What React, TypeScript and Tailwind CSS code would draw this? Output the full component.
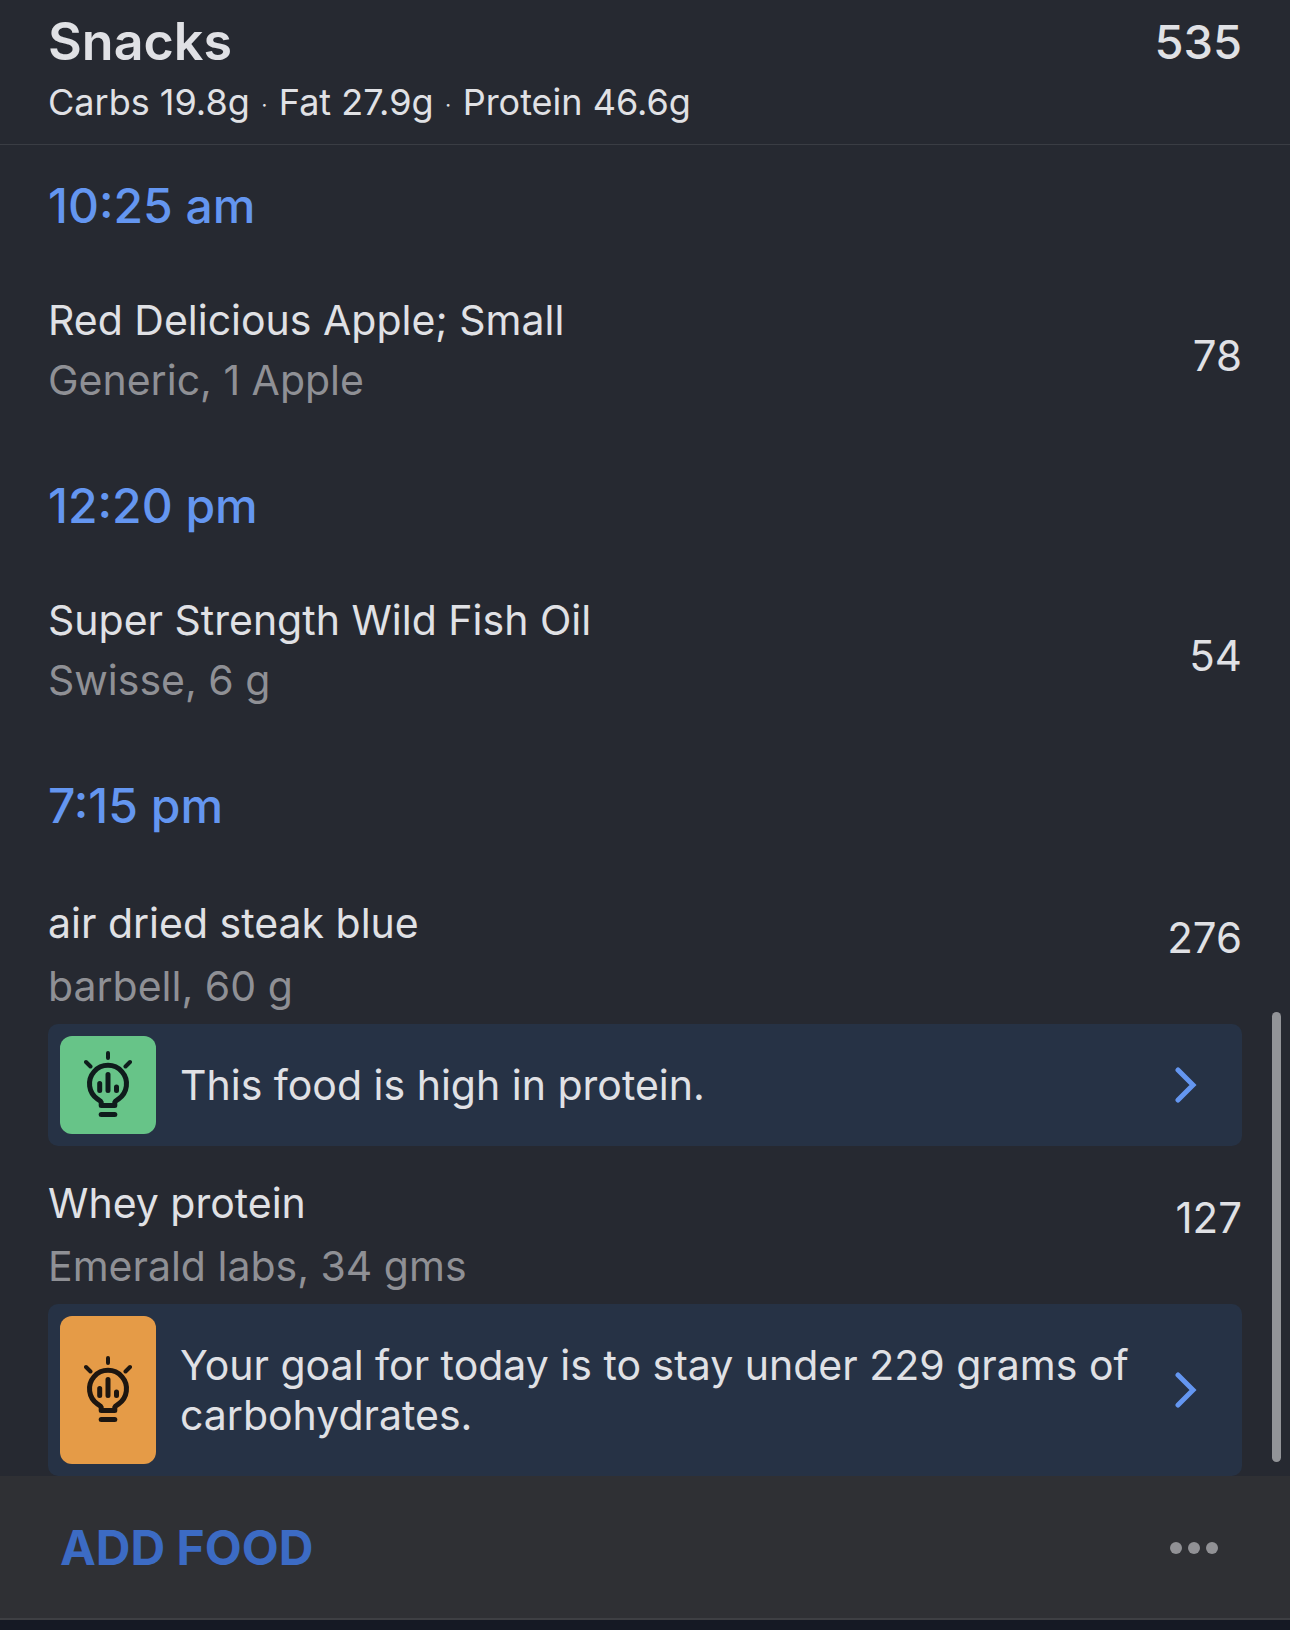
import { Fragment } from "react";

interface Insight {
  text: string;
  tone: "good" | "warning";
}

interface Food {
  name: string;
  detail: string;
  calories: number;
  insight?: Insight;
}

interface TimeGroup {
  time: string;
  foods: Food[];
}

const macros = ["Carbs 19.8g", "Fat 27.9g", "Protein 46.6g"];

const groups: TimeGroup[] = [
  {
    time: "10:25 am",
    foods: [{ name: "Red Delicious Apple; Small", detail: "Generic, 1 Apple", calories: 78 }],
  },
  {
    time: "12:20 pm",
    foods: [{ name: "Super Strength Wild Fish Oil", detail: "Swisse, 6 g", calories: 54 }],
  },
  {
    time: "7:15 pm",
    foods: [
      {
        name: "air dried steak blue",
        detail: "barbell, 60 g",
        calories: 276,
        insight: { text: "This food is high in protein.", tone: "good" },
      },
      {
        name: "Whey protein",
        detail: "Emerald labs, 34 gms",
        calories: 127,
        insight: {
          text: "Your goal for today is to stay under 229 grams of carbohydrates.",
          tone: "warning",
        },
      },
    ],
  },
];

const toneStyles = {
  good: "bg-[#67c488] text-[#0f1c1c]",
  warning: "bg-[#e59b47] text-[#1d1610]",
};

function BulbIcon() {
  return (
    <svg
      viewBox="0 0 48 66"
      className="h-[66px] w-12"
      fill="none"
      stroke="currentColor"
      strokeWidth="5"
      strokeLinecap="round"
      strokeLinejoin="round"
      aria-hidden="true"
    >
      <path d="M24 2v5M2 11l4.500 4.500M46 11l-4.500 4.500" strokeWidth="4" />
      <path d="M17.200 54.500v-3.200c-.5-1.600-2.200-2.200-3.600-3.200a18.500 18.500 0 1 1 20.800 0c-1.400 1-3.100 1.600-3.600 3.200v3.200Z" />
      <path d="M15.700 32.500v7M24 23.500v16M32.500 36v3.500" />
      <path d="M17.200 63.500h13.600" />
    </svg>
  );
}

function Chevron() {
  return (
    <svg
      viewBox="0 0 24 36"
      className="mr-8 h-9 w-6 shrink-0 self-center"
      fill="none"
      stroke="#6496f0"
      strokeWidth="5"
      strokeLinecap="round"
      aria-hidden="true"
    >
      <path d="M4 3l15 15L4 33" />
    </svg>
  );
}

function InsightCard({ insight }: { insight: Insight }) {
  return (
    <button type="button" className="flex w-full items-stretch rounded-[10px] bg-[#263245] p-3 text-left">
      <span
        className={`flex w-24 shrink-0 items-center justify-center rounded-xl pb-0.5 ${toneStyles[insight.tone]}`}
      >
        <BulbIcon />
      </span>
      <span className="flex-1 py-6 pl-6 text-[41px] leading-[50px]">{insight.text}</span>
      <Chevron />
    </button>
  );
}

function FoodRow({ food }: { food: Food }) {
  if (food.insight) {
    return (
      <li>
        <div className="flex items-start justify-between pt-[26px] pb-1.5">
          <div className="text-[41px] leading-[63px]">
            <h3>{food.name}</h3>
            <p className="text-[#8f9095]">{food.detail}</p>
          </div>
          <span className="mt-4 text-[42px] leading-[60px]">{food.calories}</span>
        </div>
        <InsightCard insight={food.insight} />
      </li>
    );
  }

  return (
    <li className="flex items-start justify-between pt-6 pb-[35px]">
      <div className="text-[41px] leading-[60px]">
        <h3>{food.name}</h3>
        <p className="text-[#8f9095]">{food.detail}</p>
      </div>
      <span className="mt-9 text-[42px] leading-[60px]">{food.calories}</span>
    </li>
  );
}

export default function App() {
  return (
    <main className="flex min-h-screen flex-col bg-[#262931] font-['Inter',sans-serif] text-[#e0e1e5]">
      <header className="border-b border-[#3a3d44] px-12 pt-3 pb-[22px]">
        <div className="flex items-center justify-between">
          <h1 className="text-[52px] leading-[60px] font-semibold">Snacks</h1>
          <span className="text-[47px] leading-[60px] font-medium">535</span>
        </div>
        <p className="mt-2.5 text-[36px] leading-10">
          {macros.map((macro, i) => (
            <Fragment key={macro}>
              {i > 0 && <span className="mx-1.5 align-middle text-xl leading-none"> · </span>}
              {macro}
            </Fragment>
          ))}
        </p>
      </header>

      <div className="relative">
        {groups.map((group) => (
          <section key={group.time} className="px-12 pt-[37px]">
            <h2 className="text-[48px] leading-[48px] font-medium text-[#6496f0]">{group.time}</h2>
            <ul className="pt-9">
              {group.foods.map((food) => (
                <FoodRow key={food.name} food={food} />
              ))}
            </ul>
          </section>
        ))}
        {/* Scroll indicator */}
        <div className="absolute right-[9px] bottom-3.5 h-[450px] w-[9px] rounded-full bg-[#929498]" />
      </div>

      <footer className="flex items-center justify-between border-b-2 border-[#3e3f43] bg-[#2f3034] pt-12 pr-[72px] pb-[46px] pl-[60px]">
        <button type="button" className="text-[48px] leading-[48px] font-bold text-[#3c6bc4]">
          ADD FOOD
        </button>
        <button type="button" aria-label="More options" className="flex gap-1.5">
          <span className="size-3 rounded-full bg-[#919195]" />
          <span className="size-3 rounded-full bg-[#919195]" />
          <span className="size-3 rounded-full bg-[#919195]" />
        </button>
      </footer>
      <div className="min-h-2.5 flex-1 bg-[#151924]" />
    </main>
  );
}
